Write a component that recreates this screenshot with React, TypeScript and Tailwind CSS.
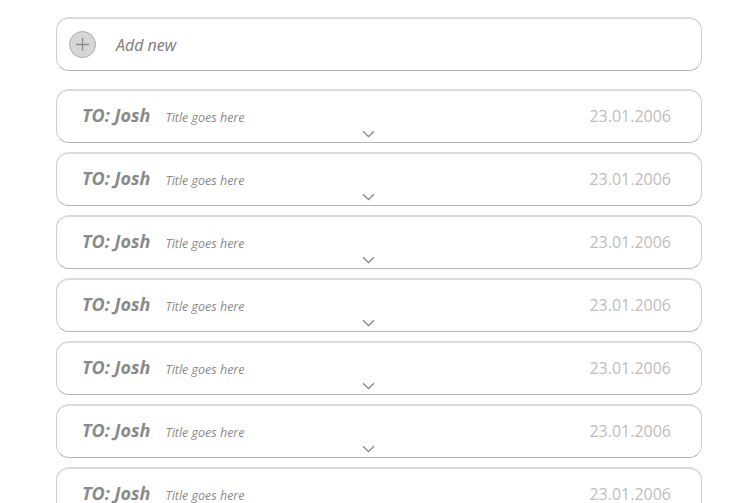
import React from "react";

const rows = Array.from({ length: 7 }, (_, i) => ({
  id: i,
  to: "Josh",
  title: "Title goes here",
  date: "23.01.2006",
}));

function Chevron() {
  return (
    <svg width="13" height="8" viewBox="0 0 13 8" fill="none">
      <path d="M1 1.2 L6.5 6.5 L12 1.2" stroke="#8a8a8a" strokeWidth="1.3" />
    </svg>
  );
}

function Card({ children, className = "" }: { children: React.ReactNode; className?: string }) {
  return (
    <div
      className={
        "w-[646px] rounded-[13px] border-t-2 border-t-[#dadada] border-x border-x-[#cdcdcd] border-b border-b-[#b4b4b4] bg-white " +
        className
      }
    >
      {children}
    </div>
  );
}

export default function App() {
  return (
    <div
      className="w-[743px] h-[503px] overflow-hidden bg-white pl-[56px] pt-[17px]"
      style={{ fontFamily: '"Open Sans", "Noto Sans", sans-serif' }}
    >
      <Card className="h-[54px] flex items-center pl-[12px]">
        <div className="w-[27px] h-[27px] rounded-full bg-[#d6d6d6] border border-[#a9a9a9] flex items-center justify-center">
          <svg width="15" height="15" viewBox="0 0 15 15">
            <path d="M7.5 1 V14 M1 7.5 H14" stroke="#8a8a8a" strokeWidth="1.3" />
          </svg>
        </div>
        <span className="ml-[20px] text-[16px] italic text-[#7a7a7a]">Add new</span>
      </Card>

      <div className="mt-[18px] flex flex-col gap-[9px]">
        {rows.map((r) => (
          <Card key={r.id} className="h-[54px] flex flex-col">
            <div className="flex items-center pl-[25px] pr-[30px] pt-[11px] h-[37px]">
              <span className="text-[18px] font-bold italic text-[#8a8a8a]">TO: {r.to}</span>
              <span className="ml-[15px] mt-[6px] text-[12.5px] italic text-[#8a8a8a]">{r.title}</span>
              <span className="ml-auto mt-[2px] text-[16px] text-[#bdbdbd]">{r.date}</span>
            </div>
            <div className="pl-[305px] pt-[2px] leading-none">
              <Chevron />
            </div>
          </Card>
        ))}
      </div>
    </div>
  );
}
